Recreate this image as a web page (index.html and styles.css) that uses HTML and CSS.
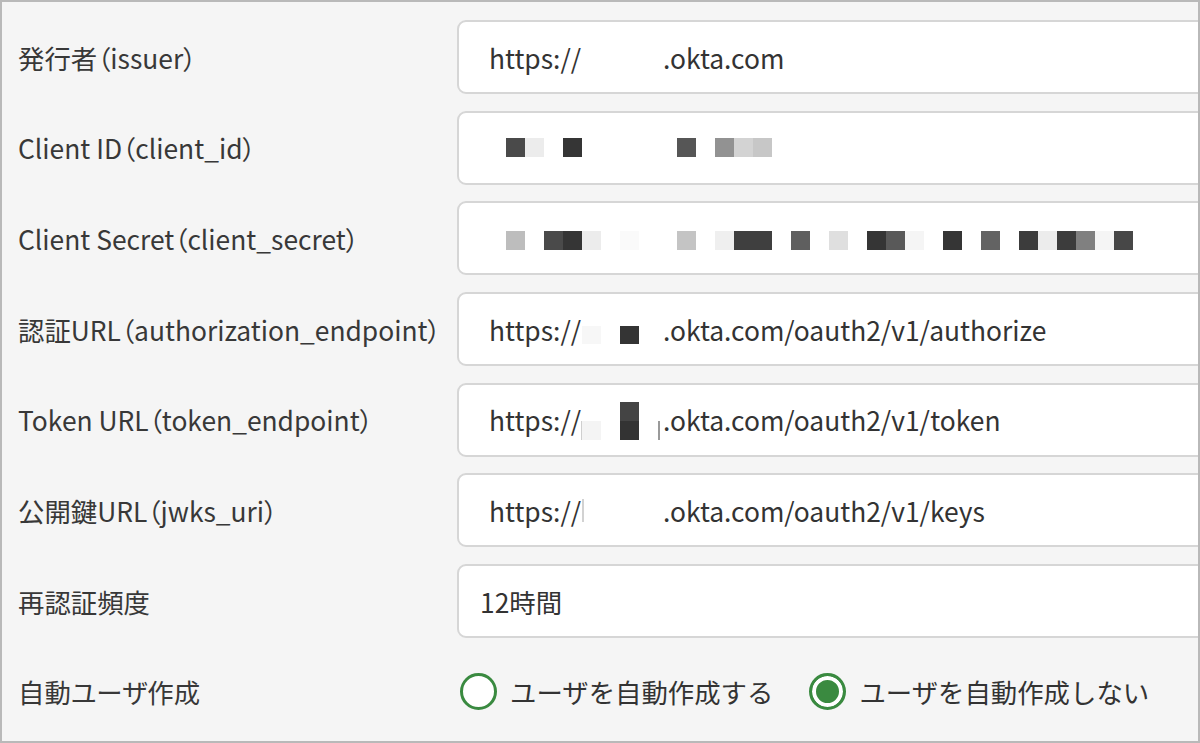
FILE: index.html
```html
<!DOCTYPE html>
<html lang="ja">
<head>
<meta charset="utf-8">
<link rel="stylesheet" href="styles.css">
</head>
<body>
<div class="frame">
  <div class="form">
    <div class="label">発行者（issuer）</div>
    <div class="field"><span class="prefix">https://</span><span>.okta.com</span></div>

    <div class="label">Client ID（client_id）</div>
    <div class="field">
      <div class="pix">
        <span class="c4a"></span><span class="cec"></span><span></span><span class="c35"></span><span></span><span></span><span></span><span></span><span></span><span class="c56"></span><span></span><span class="c93"></span><span class="cd3"></span><span class="cc7"></span>
      </div>
    </div>

    <div class="label">Client Secret（client_secret）</div>
    <div class="field">
      <div class="pix low">
        <span class="cbd"></span><span></span><span class="c4a"></span><span class="c35"></span><span class="cec"></span><span></span><span class="cfa"></span><span></span><span></span><span class="cc4"></span><span></span><span class="cef"></span><span class="c3f"></span><span class="c3f"></span><span></span><span class="c5f"></span><span></span><span class="cdf"></span><span></span><span class="c35"></span><span class="c59"></span><span class="cf5"></span><span></span><span class="c35"></span><span></span><span class="c63"></span><span></span><span class="c3c"></span><span class="cec"></span><span class="c3c"></span><span class="c80"></span><span class="cf5"></span><span class="c47"></span>
      </div>
    </div>

    <div class="label">認証URL（authorization_endpoint）</div>
    <div class="field">
      <span class="prefix">https://</span><span>.okta.com/oauth2/v1/authorize</span>
      <i class="mask m-auth-a"></i><i class="mask m-auth-b"></i>
    </div>

    <div class="label">Token URL（token_endpoint）</div>
    <div class="field">
      <span class="prefix">https://</span><span>.okta.com/oauth2/v1/token</span>
      <i class="mask m-tok-a"></i><i class="mask m-tok-b"></i><i class="mask m-tok-c"></i><i class="mask m-tok-d"></i><i class="mask m-tok-e"></i>
    </div>

    <div class="label">公開鍵URL（jwks_uri）</div>
    <div class="field">
      <span class="prefix">https://</span><span>.okta.com/oauth2/v1/keys</span>
      <i class="mask m-key"></i>
    </div>

    <div class="label">再認証頻度</div>
    <div class="field select">12時間</div>

    <div class="label">自動ユーザ作成</div>
    <div class="radios">
      <label class="radio"><span class="dot"></span>ユーザを自動作成する</label>
      <label class="radio on"><span class="dot"></span>ユーザを自動作成しない</label>
    </div>
  </div>
</div>
</body>
</html>
```

FILE: styles.css
```css
* { box-sizing: border-box; }
html, body { margin: 0; padding: 0; }
body {
  width: 1200px;
  height: 743px;
  overflow: hidden;
  font-family: "Noto Sans CJK JP", "Noto Sans", sans-serif;
  color: #333;
}
.frame {
  width: 1200px;
  height: 743px;
  border: 2px solid #b9b9b9;
  background: #f5f5f5;
  overflow: hidden;
}
.form {
  display: grid;
  grid-template-columns: 439px 800px;
  grid-auto-rows: 74px;
  row-gap: 16.7px;
  padding: 18px 0 0 16px;
}
.label {
  font-size: 26.4px;
  display: flex;
  align-items: center;
  color: #383838;
  white-space: nowrap;
  font-feature-settings: "palt";
}
.field {
  position: relative;
  background: #fff;
  border: 2px solid #d6d6d6;
  border-radius: 9px;
  display: flex;
  align-items: center;
  padding-left: 30px;
  font-size: 26.4px;
  color: #333;
  white-space: nowrap;
}
.field.select { padding-left: 21px; }
.prefix { width: 174px; flex: none; }
.pix { display: flex; margin-left: 17px; margin-top: -1px; }
.pix.low { margin-top: 5px; }
.pix span { width: 19px; height: 19px; flex: none; }
.c35 { background: #353535; }
.c3c { background: #3c3c3c; }
.c3f { background: #3f3f3f; }
.c47 { background: #474747; }
.c4a { background: #4a4a4a; }
.c56 { background: #565656; }
.c59 { background: #595959; }
.c5f { background: #5f5f5f; }
.c63 { background: #636363; }
.c80 { background: #808080; }
.c93 { background: #929292; }
.cbd { background: #bdbdbd; }
.cc4 { background: #c4c4c4; }
.cc7 { background: #c7c7c7; }
.cd3 { background: #d3d3d3; }
.cdf { background: #dfdfdf; }
.cec { background: #ececec; }
.cef { background: #efefef; }
.cf5 { background: #f5f5f5; }
.cfa { background: #fafafa; }
.mask { position: absolute; display: block; }
.m-auth-a { left: 123px; top: 32px; width: 19px; height: 18px; background: #f7f7f7; }
.m-auth-b { left: 161px; top: 32px; width: 19px; height: 18px; background: #343434; }
.m-tok-a { left: 161px; top: 17px; width: 19px; height: 19px; background: #444; }
.m-tok-b { left: 161px; top: 36px; width: 19px; height: 19px; background: #333; }
.m-tok-c { left: 123px; top: 36px; width: 19px; height: 19px; background: #f4f4f4; }
.m-tok-d { left: 122px; top: 36px; width: 1px; height: 19px; background: #cfcfcf; }
.m-tok-e { left: 199px; top: 36px; width: 2px; height: 19px; background: #9a9a9a; }
.m-key { left: 123px; top: 24px; width: 2px; height: 23px; background: #d2d2d2; }
.radios {
  display: flex;
  align-items: center;
  padding-left: 3px;
  font-size: 26.4px;
  color: #333;
}
.radio {
  display: flex;
  align-items: center;
  margin-right: 36px;
  white-space: nowrap;
}
.dot {
  width: 37px;
  height: 37px;
  border-radius: 50%;
  border: 3.5px solid #3a8a40;
  background: #fff;
  margin-right: 13px;
  flex: none;
}
.radio.on .dot {
  background: #3a8a40;
  box-shadow: inset 0 0 0 4px #fff;
}
```
